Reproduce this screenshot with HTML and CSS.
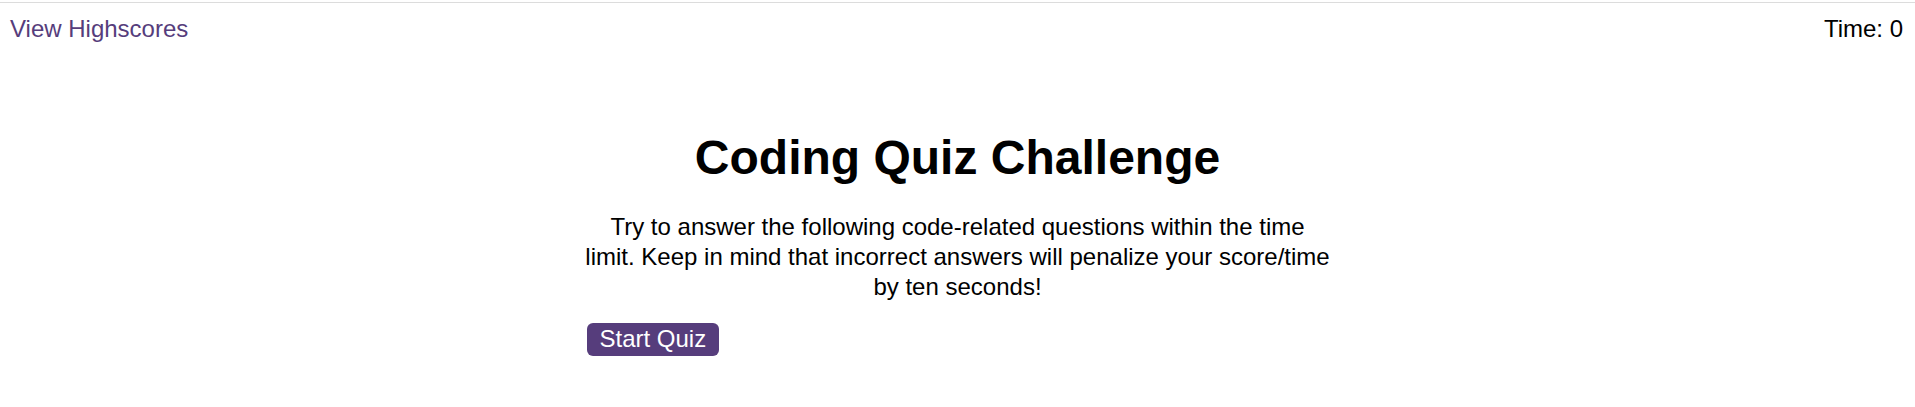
FILE: index.html
```html
<!DOCTYPE html>
<html>
<head>
<meta charset="utf-8">
<title>Coding Quiz</title>
<link rel="stylesheet" href="styles.css">
</head>
<body>
<div class="topline"></div>
<header class="header">
  <a class="highscores" href="#">View Highscores</a>
  <div class="timer">Time: 0</div>
</header>
<main class="quiz">
  <h1 class="title">Coding Quiz Challenge</h1>
  <p class="intro">Try to answer the following code-related questions within the time limit. Keep in mind that incorrect answers will penalize your score/time by ten seconds!</p>
  <div class="actions">
    <button class="start">Start Quiz</button>
  </div>
</main>
</body>
</html>
```

FILE: styles.css
```css
html, body {
  margin: 0;
  padding: 0;
  background: #ffffff;
}
body {
  font-family: "Liberation Sans", Arial, sans-serif;
  font-size: 24px;
  color: #000;
}
.topline {
  height: 2px;
  background: #ffffff;
  border-bottom: 1px solid #dcdcdc;
}
.header {
  display: flex;
  justify-content: space-between;
  padding: 12px 12px 0 10px;
}
.highscores {
  color: #563d7c;
  text-decoration: none;
}
.timer {
  color: #000;
}
.quiz {
  width: 746px;
  margin: 0 auto;
  display: flex;
  flex-direction: column;
}
.title {
  font-size: 48px;
  font-weight: bold;
  text-align: center;
  margin: 87px 0 0 0;
}
.intro {
  text-align: center;
  line-height: 30px;
  margin: 27px 0 0 0;
}
.actions {
  display: flex;
  margin-top: 21px;
}
.start {
  font-family: "Liberation Sans", Arial, sans-serif;
  font-size: 24px;
  color: #ffffff;
  background: #563d7c;
  border: none;
  border-radius: 6px;
  padding: 2px 13px 3px;
  margin-left: 2px;
  cursor: pointer;
}
```
